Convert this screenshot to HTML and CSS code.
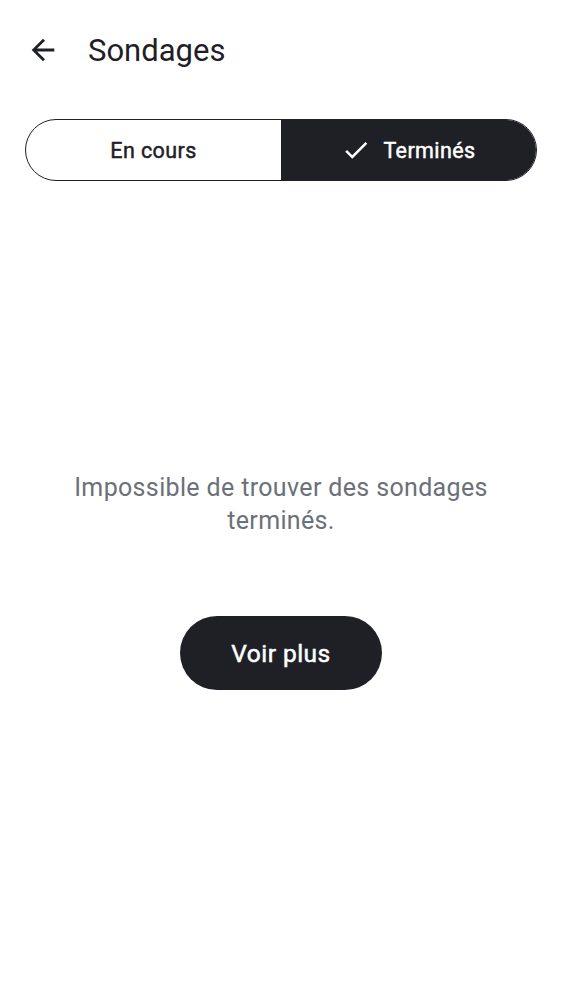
FILE: index.html
```html
<!DOCTYPE html>
<html lang="fr">
<head>
<meta charset="utf-8">
<link rel="stylesheet" href="styles.css">
</head>
<body>
<div class="screen">
  <header class="topbar">
    <svg class="back" viewBox="0 0 24 24" width="34" height="34"><path d="M20 11H7.83l5.59-5.59L12 4l-8 8 8 8 1.41-1.41L7.83 13H20v-2z" fill="#1f2026"/></svg>
    <h1 class="title">Sondages</h1>
  </header>
  <div class="segmented">
    <div class="seg">En cours</div>
    <div class="seg active">
      <svg class="check" viewBox="0 0 24 24" width="30" height="30"><path d="M9 16.17L4.83 12l-1.42 1.41L9 19 21 7l-1.41-1.41z" fill="#ffffff"/></svg>
      <span>Terminés</span>
    </div>
  </div>
  <main class="empty">
    <p class="msg">Impossible de trouver des sondages terminés.</p>
    <button class="more">Voir plus</button>
  </main>
</div>
</body>
</html>
```

FILE: styles.css
```css
* { box-sizing: border-box; }
html, body { margin: 0; padding: 0; background: #fff; }
body { font-family: Roboto, "Noto Sans", sans-serif; color: #1f2026; }
.screen { width: 562px; height: 1000px; }
.topbar { display: flex; align-items: center; height: 100px; padding-left: 26px; gap: 28px; }
.back { display: block; }
.title { margin: 0; font-size: 31px; font-weight: 400; color: #1f2026; }
.segmented { display: flex; margin: 19px 25px 0 25px; height: 62px; border: 1px solid #1f2026; border-radius: 31px; overflow: hidden; }
.seg { flex: 1; display: flex; align-items: center; justify-content: center; font-size: 21.5px; font-weight: 400; -webkit-text-stroke: 0.45px currentColor; letter-spacing: 0.4px; color: #1f2026; }
.seg.active { background: #1f2026; color: #fff; gap: 12px; }
.check { display: block; }
.empty { display: flex; flex-direction: column; align-items: center; padding-top: 290px; }
.msg { margin: 0; width: 480px; text-align: center; font-size: 25px; line-height: 33px; color: #6b7079; letter-spacing: 0.35px; }
.more { margin-top: 79px; width: 202px; height: 74px; border: none; border-radius: 37px; background: #1f2026; color: #fff; font-family: Roboto, sans-serif; font-size: 24.5px; font-weight: 400; -webkit-text-stroke: 0.5px #fff; letter-spacing: 0.45px; }
```
